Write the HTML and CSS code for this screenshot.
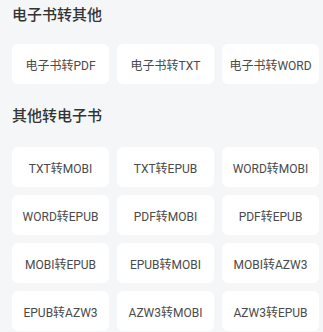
FILE: index.html
```html
<!DOCTYPE html>
<html lang="zh-CN">
<head>
    <meta charset="UTF-8">
    <meta name="viewport" content="width=device-width, initial-scale=1.0">
    <title>格式转换</title>
    <link rel="stylesheet" href="styles.css">
</head>
<body>
    <div class="section first">
        <div class="section-title">电子书转其他</div>
        <div class="grid">
            <div class="item">电子书转PDF</div>
            <div class="item">电子书转TXT</div>
            <div class="item">电子书转WORD</div>
        </div>
    </div>

    <div class="section second">
        <div class="section-title">其他转电子书</div>
        <div class="grid">
            <div class="item">TXT转MOBI</div>
            <div class="item">TXT转EPUB</div>
            <div class="item">WORD转MOBI</div>
            <div class="item">WORD转EPUB</div>
            <div class="item">PDF转MOBI</div>
            <div class="item">PDF转EPUB</div>
            <div class="item">MOBI转EPUB</div>
            <div class="item">EPUB转MOBI</div>
            <div class="item">MOBI转AZW3</div>
            <div class="item">EPUB转AZW3</div>
            <div class="item">AZW3转MOBI</div>
            <div class="item">AZW3转EPUB</div>
        </div>
    </div>
</body>
</html>
```

FILE: styles.css
```css
body {
    font-family: "Noto Sans CJK SC", "Noto Sans", sans-serif;
    background-color: #f5f6f8;
    color: #333333;
    margin: 0;
    padding: 0 4px 0 12px;
    overflow: hidden;
}
.section-title {
    font-size: 15px;
    font-weight: 500;
    height: 28px;
    line-height: 28px;
    color: #333333;
}
.first .section-title {
    margin-bottom: 16px;
}
.second {
    margin-top: 17px;
}
.second .section-title {
    margin-bottom: 18px;
}
.grid {
    display: grid;
    grid-template-columns: repeat(3, 1fr);
    gap: 8px;
}
.item {
    background-color: #ffffff;
    border-radius: 6px;
    height: 40px;
    display: flex;
    align-items: center;
    justify-content: center;
    font-family: Roboto, "Noto Sans CJK SC", sans-serif;
    font-size: 12px;
    color: #4a4a4a;
    white-space: nowrap;
}
```
